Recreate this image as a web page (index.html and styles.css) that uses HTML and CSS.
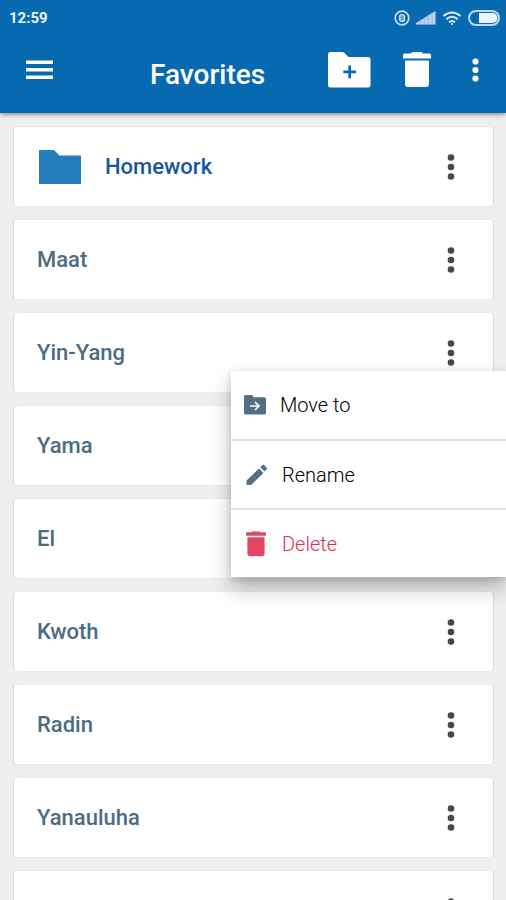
FILE: index.html
```html
<!DOCTYPE html>
<html lang="en">
<head>
<meta charset="utf-8">
<meta name="viewport" content="width=device-width, initial-scale=1">
<title>Favorites</title>
<link rel="stylesheet" href="styles.css">
</head>
<body>
<svg class="sprite" aria-hidden="true">
  <symbol id="dots" viewBox="0 0 8 28"><circle cx="4" cy="4.500" r="3.300"/><circle cx="4" cy="14" r="3.300"/><circle cx="4" cy="23.500" r="3.300"/></symbol>
  <symbol id="trash" viewBox="0 0 28 36"><path d="M8 1.500Q8.500 0 10 0h8q1.500 0 2 1.500h6.500q1.500 0 1.500 1.500v3.500H0V3q0-1.500 1.500-1.500zM2 8.500h24V32q0 3-3 3H5q-3 0-3-3z"/></symbol>
</svg>
<div class="screen">
  <header class="header">
    <div class="status">
      <time class="clock">12:59</time>
      <div class="status-icons">
        <svg class="outline" width="16" height="16" viewBox="0 0 16 16" stroke="#c4dcf2"><circle cx="8" cy="8" r="6.800" stroke-width="1.700"/><rect x="5.500" y="4.500" width="5" height="7" rx="2" fill="#8fb9e0" stroke-width="1.200"/><path d="M8 6v4" stroke="#3a7dbb"/></svg>
        <svg width="20" height="16" viewBox="0 0 20 16"><path fill="#b9d3ec" d="M0 14.500V13L19.500 1v13.500z"/><path d="M4.200 9v6M8.200 7v8M12.200 4v11M16.200 2v13" stroke="#7fabd6" stroke-width=".6"/></svg>
        <svg class="outline" width="20" height="16" viewBox="0 0 20 16" stroke="#dcebf9" stroke-width="2"><path d="M1.500 6Q10-1 18.500 6M4.200 9.200q5.800-4.800 11.600 0M7 12.200q3-2.500 6 0"/><circle cx="10" cy="14" r="1" fill="#e6f2fd" stroke="none"/></svg>
        <svg width="32" height="16" viewBox="0 0 32 16"><rect x="1" y="1" width="30" height="14" rx="7" fill="none" stroke="#bcd8f2" stroke-width="2"/><path d="M11 3h13.500a5 5 0 0 1 0 10H11z" fill="#eaf4fd"/></svg>
      </div>
    </div>
    <div class="toolbar">
      <button class="icon-btn menu-btn" aria-label="Open navigation"><svg width="27" height="20" viewBox="0 0 27 20"><path d="M0 .5h27v3.500H0zM0 8h27v3.500H0zM0 15.500h27V19H0z"/></svg></button>
      <h1 class="title">Favorites</h1>
      <button class="icon-btn" aria-label="New folder"><svg width="43" height="36" viewBox="0 0 43 36"><path fill-rule="evenodd" d="M2.500 0H14q1.500 0 2.500 1l4 4H40q2.500 0 2.500 2.500V33q0 2.500-2.500 2.500H2.500Q0 35.500 0 33V2.500Q0 0 2.500 0zM20.300 13.500v5h-5v2.700h5v5H23v-5h5v-2.700h-5v-5z"/></svg></button>
      <button class="icon-btn trash-btn" aria-label="Delete"><svg width="28" height="36"><use href="#trash"/></svg></button>
      <button class="icon-btn" aria-label="More options"><svg width="7" height="24" viewBox="0 0 7 24"><circle cx="3.500" cy="3.500" r="3.100"/><circle cx="3.500" cy="12" r="3.100"/><circle cx="3.500" cy="20.500" r="3.100"/></svg></button>
    </div>
  </header>
  <main>
    <ul class="list">
      <li class="card folder"><svg width="42" height="34" viewBox="0 0 42 34"><path d="M0 0h15l5.500 5.500H42V34H0z"/></svg><span class="name">Homework</span><button class="icon-btn" aria-label="Options for Homework"><svg width="8" height="28"><use href="#dots"/></svg></button></li>
      <li class="card"><span class="name">Maat</span><button class="icon-btn" aria-label="Options for Maat"><svg width="8" height="28"><use href="#dots"/></svg></button></li>
      <li class="card"><span class="name">Yin-Yang</span><button class="icon-btn" aria-label="Options for Yin-Yang"><svg width="8" height="28"><use href="#dots"/></svg></button>
        <div class="popup" role="menu">
          <button class="item move" role="menuitem"><svg width="22" height="20" viewBox="0 0 22 20"><path fill-rule="evenodd" d="M1.500 0H7q1 0 1.500.6L10 2.200h10.500q1.500 0 1.500 1.500v14.300q0 1.500-1.500 1.500h-19Q0 19.500 0 18V1.500Q0 0 1.500 0zM6 10.200v1.600h7.200l-2.700 2.700 1.100 1.100L16.200 11l-4.600-4.600-1.100 1.100 2.700 2.700z"/></svg>Move to</button>
          <button class="item" role="menuitem"><svg width="22" height="22" viewBox="0 0 22 22"><path d="M.5 21v-4.500L13 4.500 17.500 9 5 21zM14.300 3.200l2-2q1-1 2 0L20.500 3.500q1 1 0 2l-2 2z"/></svg>Rename</button>
          <button class="item danger" role="menuitem"><svg width="20" height="26" viewBox="0 0 28 36"><use href="#trash"/></svg>Delete</button>
        </div>
      </li>
      <li class="card"><span class="name">Yama</span><button class="icon-btn" aria-label="Options for Yama"><svg width="8" height="28"><use href="#dots"/></svg></button></li>
      <li class="card"><span class="name">El</span><button class="icon-btn" aria-label="Options for El"><svg width="8" height="28"><use href="#dots"/></svg></button></li>
      <li class="card"><span class="name">Kwoth</span><button class="icon-btn" aria-label="Options for Kwoth"><svg width="8" height="28"><use href="#dots"/></svg></button></li>
      <li class="card"><span class="name">Radin</span><button class="icon-btn" aria-label="Options for Radin"><svg width="8" height="28"><use href="#dots"/></svg></button></li>
      <li class="card"><span class="name">Yanauluha</span><button class="icon-btn" aria-label="Options for Yanauluha"><svg width="8" height="28"><use href="#dots"/></svg></button></li>
      <li class="card"><span class="name"></span><button class="icon-btn" aria-label="Options"><svg width="8" height="28"><use href="#dots"/></svg></button></li>
    </ul>
  </main>
</div>
</body>
</html>
```
FILE: styles.css
```css
* { box-sizing: border-box; }

body {
  margin: 0;
  background: #efefef;
  font-family: Roboto, "Liberation Sans", sans-serif;
}

.sprite { position: absolute; width: 0; height: 0; }

.screen { height: 100vh; overflow: hidden; }

svg { display: block; flex: none; fill: currentColor; }
.outline { fill: none; }

button {
  border: 0;
  padding: 0;
  background: none;
  color: inherit;
  font: inherit;
}

.header {
  background: #076ab0;
  color: #fff;
  box-shadow: 0 1px 5px rgba(0, 0, 0, 0.5);
}

.status {
  display: flex;
  align-items: center;
  justify-content: space-between;
  height: 35px;
  padding: 0 6px 0 9px;
}

.clock { font-size: 15px; font-weight: 700; color: #e8f3fd; }

.status-icons { display: flex; align-items: center; gap: 6px; }

.toolbar {
  display: flex;
  align-items: center;
  height: 78px;
  padding: 0 27px 8px 26px;
}

.menu-btn { margin-right: 97px; }
.trash-btn { margin: 0 41px 0 32px; }

.title {
  flex: 1;
  margin: 0;
  padding-top: 9px;
  font-size: 28px;
  font-weight: 500;
  line-height: 32px;
}

.list {
  display: flex;
  flex-direction: column;
  gap: 14px;
  margin: 0;
  padding: 14px 13px 14px 14px;
  list-style: none;
}

.card {
  position: relative;
  display: flex;
  align-items: center;
  flex: none;
  height: 79px;
  padding: 0 38px 0 23px;
  border-radius: 3px;
  background: #fff;
  color: #4b6c82;
  box-shadow: -1px 0 1px rgba(0, 0, 0, 0.1), 1px 0 1px rgba(0, 0, 0, 0.1);
}

.name { flex: 1; font-size: 22px; font-weight: 500; }

.card > .icon-btn { color: #484848; }

.folder { gap: 24px; padding-left: 25px; color: #267dbb; }
.folder .name { color: #1656a3; }

.popup {
  position: absolute;
  z-index: 1;
  top: 58px;
  right: -13px;
  width: 275px;
  background: #fff;
  box-shadow: 0 12px 20px rgba(0, 0, 0, 0.24), 0 2px 8px rgba(0, 0, 0, 0.16);
}

.item {
  display: flex;
  align-items: center;
  gap: 14px;
  width: 100%;
  height: 68px;
  padding: 0 15px;
  color: #000;
  font-size: 20px;
  font-weight: 300;
}

.item + .item { height: 69px; border-top: 2px solid #e2e2e2; }
.item svg { color: #527083; }
.move { padding-left: 13px; }

.danger { gap: 16px; color: #dc2f52; }
.danger svg { color: #e44562; }
```
